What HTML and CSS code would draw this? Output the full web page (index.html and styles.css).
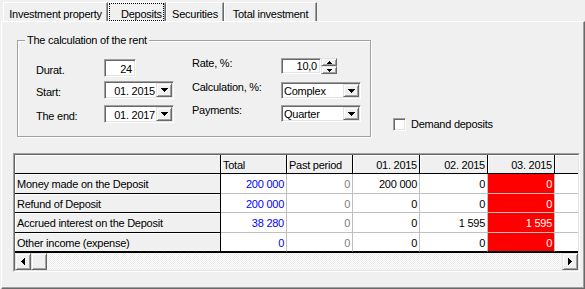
FILE: index.html
```html
<!DOCTYPE html>
<html>
<head>
<meta charset="utf-8">
<link rel="stylesheet" href="styles.css">
</head>
<body>
<div class="tabs">
  <div class="tab t1">Investment property</div>
  <div class="tab t2"><span class="focus">Deposits</span></div>
  <div class="tab t3">Securities</div>
  <div class="tab t4">Total investment</div>
</div>
<div class="page">
  <div class="top">
    <div class="group">
      <div class="legend">The calculation of the rent</div>
      <div class="group-body">
        <div class="col col-left">
          <div class="row"><span class="lbl">Durat.</span><div class="edit e-durat">24</div></div>
          <div class="row r2"><span class="lbl">Start:</span>
            <div class="combo c-date"><span class="val">01. 2015</span><span class="btn3d cbtn"><svg width="7" height="4" viewBox="0 0 7 4" shape-rendering="crispEdges"><path d="M0 0h7v1H0zM1 1h5v1H1zM2 2h3v1H2zM3 3h1v1H3z"/></svg></span></div>
          </div>
          <div class="row r3"><span class="lbl">The end:</span>
            <div class="combo c-date"><span class="val">01. 2017</span><span class="btn3d cbtn"><svg width="7" height="4" viewBox="0 0 7 4" shape-rendering="crispEdges"><path d="M0 0h7v1H0zM1 1h5v1H1zM2 2h3v1H2zM3 3h1v1H3z"/></svg></span></div>
          </div>
        </div>
        <div class="col col-right">
          <div class="row"><span class="lbl">Rate, %:</span>
            <div class="edit e-rate">10,0</div>
            <div class="spin">
              <span class="btn3d sbtn"><svg width="5" height="3" viewBox="0 0 5 3" shape-rendering="crispEdges"><path d="M2 0h1v1H2zM1 1h3v1H1zM0 2h5v1H0z"/></svg></span>
              <span class="btn3d sbtn"><svg width="5" height="3" viewBox="0 0 5 3" shape-rendering="crispEdges"><path d="M0 0h5v1H0zM1 1h3v1H1zM2 2h1v1H2z"/></svg></span>
            </div>
          </div>
          <div class="row r2"><span class="lbl">Calculation, %:</span>
            <div class="combo c-list"><span class="val">Complex</span><span class="btn3d cbtn"><svg width="7" height="4" viewBox="0 0 7 4" shape-rendering="crispEdges"><path d="M0 0h7v1H0zM1 1h5v1H1zM2 2h3v1H2zM3 3h1v1H3z"/></svg></span></div>
          </div>
          <div class="row r3"><span class="lbl">Payments:</span>
            <div class="combo c-list"><span class="val">Quarter</span><span class="btn3d cbtn"><svg width="7" height="4" viewBox="0 0 7 4" shape-rendering="crispEdges"><path d="M0 0h7v1H0zM1 1h5v1H1zM2 2h3v1H2zM3 3h1v1H3z"/></svg></span></div>
          </div>
        </div>
      </div>
    </div>
    <div class="check"><span class="box"></span><span>Demand deposits</span></div>
  </div>
  <div class="grid">
    <div class="grid-inner">
      <div class="cells">
        <div class="c fx"></div>
        <div class="c fx">Total</div>
        <div class="c fx">Past period</div>
        <div class="c fx r">01. 2015</div>
        <div class="c fx r">02. 2015</div>
        <div class="c fx r">03. 2015</div>
        <div class="c fx last"></div>

        <div class="c fx">Money made on the Deposit</div>
        <div class="c d blue">200 000</div>
        <div class="c d gray">0</div>
        <div class="c d">200 000</div>
        <div class="c d">0</div>
        <div class="c d red">0</div>
        <div class="c d last"></div>

        <div class="c fx">Refund of Deposit</div>
        <div class="c d blue">200 000</div>
        <div class="c d gray">0</div>
        <div class="c d">0</div>
        <div class="c d">0</div>
        <div class="c d red">0</div>
        <div class="c d last"></div>

        <div class="c fx">Accrued interest on the Deposit</div>
        <div class="c d blue">38 280</div>
        <div class="c d gray">0</div>
        <div class="c d">0</div>
        <div class="c d">1 595</div>
        <div class="c d red">1 595</div>
        <div class="c d last"></div>

        <div class="c fx bot">Other income (expense)</div>
        <div class="c d bot blue">0</div>
        <div class="c d bot gray">0</div>
        <div class="c d bot">0</div>
        <div class="c d bot">0</div>
        <div class="c d bot red">0</div>
        <div class="c d bot last"></div>
      </div>
      <div class="hscroll">
        <span class="btn3d arrow"><svg width="4" height="7" viewBox="0 0 4 7" shape-rendering="crispEdges"><path d="M3 0h1v7H3zM2 1h1v5H2zM1 2h1v3H1zM0 3h1v1H0z"/></svg></span>
        <span class="btn3d thumb"></span>
        <span class="track"></span>
        <span class="btn3d arrow"><svg width="4" height="7" viewBox="0 0 4 7" shape-rendering="crispEdges"><path d="M0 0h1v7H0zM1 1h1v5H1zM2 2h1v3H2zM3 3h1v1H3z"/></svg></span>
      </div>
    </div>
  </div>
</div>
</body>
</html>
```

FILE: styles.css
```css
* { box-sizing: border-box; }
html, body { margin: 0; background: #f0f0f0; }
body {
  font-family: "Liberation Sans", Arial, sans-serif;
  font-size: 11px;
  letter-spacing: -0.25px;
  color: #000;
  width: 585px;
  height: 289px;
  overflow: hidden;
}

/* tabs */
.tabs { display: flex; height: 21px; padding: 2px 0 0 3px; }
.tab {
  height: 19px;
  border-top: 1px solid #fff;
  border-left: 1px solid #fff;
  border-right: 1px solid #696969;
  box-shadow: inset -1px 0 #a0a0a0;
  padding-top: 4px;
  line-height: 14px;
  text-align: center;
  white-space: nowrap;
}
.t1 { width: 105px; }
.t2 { width: 58px; padding: 0; }
.t3 { width: 58px; }
.t4 { width: 93px; }
.focus {
  display: block;
  width: 55px;
  height: 18px;
  border: 1px dotted #000;
  padding: 3px 0 0 11px;
  line-height: 14px;
  text-align: left;
}

/* page */
.page {
  width: 584px;
  height: 268px;
  margin-left: 1px;
  border-top: 1px solid #fff;
  border-left: 1px solid #fff;
  border-right: 1px solid #696969;
  border-bottom: 1px solid #696969;
  box-shadow: inset -1px -1px #a0a0a0;
}
.top { display: flex; align-items: flex-start; }

.group {
  margin: 18px 0 0 15px;
  width: 354px;
  height: 97px;
  border: 1px solid #a0a0a0;
  box-shadow: 1px 1px 0 #fff, inset 1px 1px 0 #fff;
}
.legend {
  display: table;
  margin: -7px 0 0 7px;
  padding: 0 2px;
  background: #f0f0f0;
  line-height: 13px;
}
.group-body { display: flex; padding-left: 18px; }
.col { display: flex; flex-direction: column; }
.col-left { width: 138px; padding-top: 12px; }
.col-right { margin-left: 18px; padding-top: 11px; }
.row { display: flex; }
.col-left .row { height: 18px; align-items: flex-end; }
.col-left .r2 { margin-top: 4px; }
.col-left .r3 { margin-top: 6px; }
.col-left .lbl { width: 68px; line-height: 13px; }
.col-right .row { height: 17px; align-items: flex-start; }
.col-right .r2 { margin-top: 7px; }
.col-right .r3 { margin-top: 6px; }
.col-right .lbl { width: 89px; line-height: 13px; margin-top: -1px; }

.edit, .combo, .box {
  background: #fff;
  border: 1px solid;
  border-color: #a0a0a0 #fff #fff #a0a0a0;
  box-shadow: inset 1px 1px #696969, inset -1px -1px #e3e3e3;
}
.edit { line-height: 14px; text-align: right; white-space: nowrap; }
.e-durat { width: 32px; height: 18px; padding: 2px 3px 0 2px; }
.e-rate { width: 40px; height: 16px; padding: 1px 3px 0 2px; line-height: 13px; }

.spin { display: flex; flex-direction: column; width: 16px; height: 16px; }
.sbtn { height: 8px; }

.combo { display: flex; padding: 1px; height: 18px; }
.c-date { width: 70px; }
.c-list { width: 80px; height: 17px; }
.combo .val { flex: 1; line-height: 14px; padding-top: 1px; white-space: nowrap; }
.c-date .val { text-align: right; padding-right: 1px; }
.c-list .val { padding-left: 1px; line-height: 13px; }
.cbtn { width: 16px; }

.btn3d {
  background: #f0f0f0;
  border: 1px solid;
  border-color: #e3e3e3 #696969 #696969 #e3e3e3;
  box-shadow: inset 1px 1px #fff, inset -1px -1px #a0a0a0;
  display: flex;
  align-items: center;
  justify-content: center;
}
.btn3d svg { display: block; fill: #000; }

.check {
  display: flex;
  align-items: center;
  margin: 96px 0 0 22px;
  line-height: 13px;
  white-space: nowrap;
}
.box { width: 13px; height: 13px; margin-right: 5px; }

/* grid */
.grid {
  width: 567px;
  margin: 16px 0 0 11px;
  border: 1px solid;
  border-color: #a0a0a0 #fff #fff #a0a0a0;
}
.grid-inner {
  border: 1px solid;
  border-color: #696969 #e3e3e3 #e3e3e3 #696969;
}
.cells {
  display: grid;
  grid-template-columns: 206px 66px 66px 67px 68px 67px 23px;
  grid-template-rows: 19px 20px 19px 20px 19px;
}
.c {
  border-right: 1px solid;
  border-bottom: 1px solid;
  padding: 2px 2px 0;
  line-height: 16px;
  white-space: nowrap;
  overflow: hidden;
}
.fx { background: #f0f0f0; border-color: #000; box-shadow: inset 1px 1px #fff; }
.r { text-align: right; }
.d { background: #fff; border-color: #c0c0c0; text-align: right; }
.last { border-right: 0; }
.bot { border-bottom-color: #000; }
.blue { color: #0000ff; }
.gray { color: #808080; }
.red { background: #ff0000; color: #fff; }

.hscroll {
  display: flex;
  height: 18px;
  border-top: 1px solid #000;
  background: repeating-conic-gradient(#fff 0 25%, #ebebeb 0 50%) 0 0 / 2px 2px;
}
.arrow { width: 16px; height: 17px; }
.thumb { width: 16px; height: 17px; }
.track { flex: 1; }
```
